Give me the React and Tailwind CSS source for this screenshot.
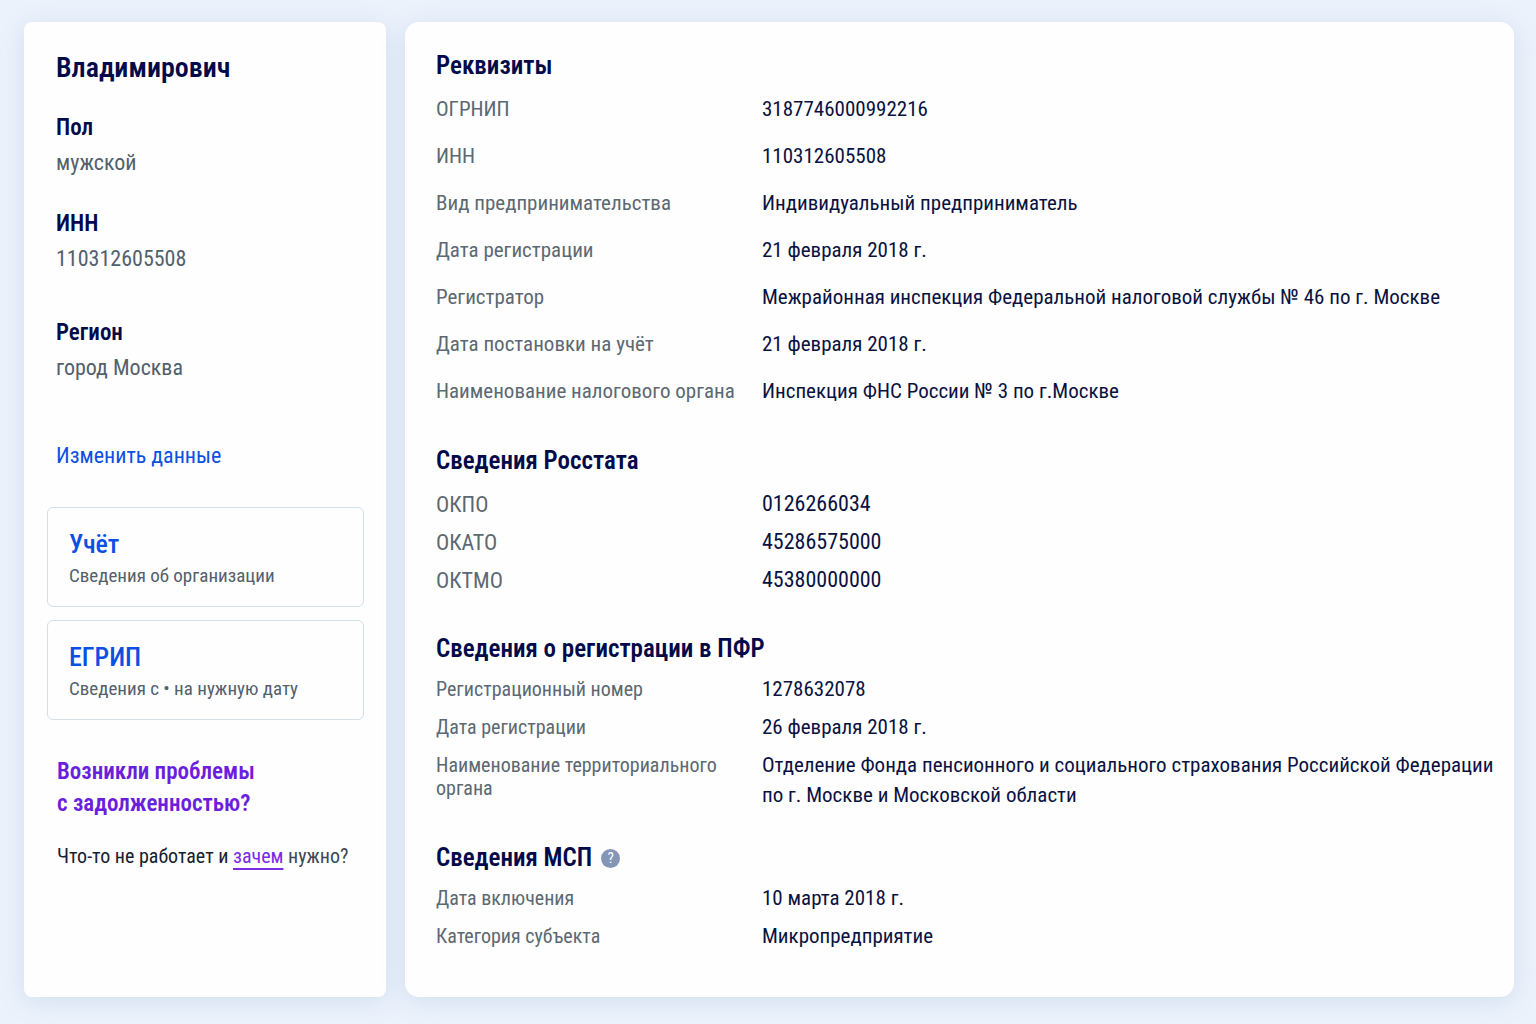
import React from 'react';

const REQUISITES = [
  ['ОГРНИП', '3187746000992216'],
  ['ИНН', '110312605508'],
  ['Вид предпринимательства', 'Индивидуальный предприниматель'],
  ['Дата регистрации', '21 февраля 2018 г.'],
  ['Регистратор', 'Межрайонная инспекция Федеральной налоговой службы № 46 по г. Москве'],
  ['Дата постановки на учёт', '21 февраля 2018 г.'],
  ['Наименование налогового органа', 'Инспекция ФНС России № 3 по г.Москве'],
];

const ROSSTAT = [
  ['ОКПО', '0126266034'],
  ['ОКАТО', '45286575000'],
  ['ОКТМО', '45380000000'],
];

const PENSION_FUND = [
  ['Регистрационный номер', '1278632078'],
  ['Дата регистрации', '26 февраля 2018 г.'],
  [
    'Наименование территориального органа',
    'Отделение Фонда пенсионного и социального страхования Российской Федерации по г. Москве и Московской области',
  ],
];

const SME = [
  ['Дата включения', '10 марта 2018 г.'],
  ['Категория субъекта', 'Микропредприятие'],
];

const DENSITY = {
  loose: { list: 'mt-[13px] space-y-[17px]', label: 'text-[21px]', value: 'text-[21px]' },
  codes: { list: 'mt-[13px] space-y-2', label: 'text-[22px]', value: 'text-[22px]' },
  compact: { list: 'mt-[10px] space-y-2', label: 'text-[20px]', value: 'text-[21px]' },
};

function Field({ label, value, className }) {
  return (
    <div className={className}>
      <dt className="text-[23px] leading-7 font-semibold text-[#030a4a]">{label}</dt>
      <dd className="mt-[7px] text-[22px] leading-7 text-[#53606c]">{value}</dd>
    </div>
  );
}

function LinkCard({ title, text }) {
  return (
    <a href="#" className="block rounded-md border border-[#d5dde9] px-[21px] pt-[21px] pb-[17px]">
      <span className="block text-[26px] leading-[30px] font-medium text-[#0b4fe3]">{title}</span>
      <span className="mt-1 block text-[19px] leading-[26px] text-[#53606c]">{text}</span>
    </a>
  );
}

function Section({ title, rows, hint, density = 'compact', className }) {
  const styles = DENSITY[density];

  return (
    <section className={className}>
      <div className="flex items-center gap-[9px]">
        <h2 className="text-[25px] leading-[30px] font-semibold text-[#030a4a]">{title}</h2>
        {hint}
      </div>
      <dl className={styles.list}>
        {rows.map(([label, value]) => (
          <div key={label} className="grid grid-cols-[300px_minmax(0,1fr)] gap-x-[26px]">
            <dt className={`pt-1 leading-[23px] text-[#5c6872] ${styles.label}`}>{label}</dt>
            <dd className={`leading-[30px] text-[#0a1140] ${styles.value}`}>{value}</dd>
          </div>
        ))}
      </dl>
    </section>
  );
}

function HelpButton() {
  return (
    <button
      type="button"
      aria-label="Что такое МСП"
      className="flex size-[19px] items-center justify-center rounded-full bg-[#8496b5] text-[15px] leading-none text-white"
    >
      ?
    </button>
  );
}

export default function App() {
  return (
    <div className="flex min-h-screen gap-[19px] bg-[#ebf2fc] pt-[22px] pr-[22px] pb-[27px] pl-6 font-['Roboto_Condensed',Roboto,sans-serif]">
      <aside className="w-[362px] shrink-0 rounded-lg bg-[#fefefe] pt-[30px] pr-[22px] pb-8 pl-[23px] shadow-[0_4px_24px_rgba(100,140,180,0.18)]">
        <div className="pl-[9px]">
          <h1 className="text-[28px] leading-8 font-semibold text-[#030a4a]">Владимирович</h1>
          <dl className="mt-[30px]">
            <Field label="Пол" value="мужской" />
            <Field label="ИНН" value="110312605508" className="mt-[33px]" />
            <Field label="Регион" value="город Москва" className="mt-[46px]" />
          </dl>
          <a href="#" className="mt-[60px] block text-[22px] leading-7 text-[#0b4fe3]">
            Изменить данные
          </a>
        </div>

        <nav className="mt-[37px] space-y-[13px]">
          <LinkCard title="Учёт" text="Сведения об организации" />
          <LinkCard title="ЕГРИП" text="Сведения с • на нужную дату" />
        </nav>

        <div className="mt-9 pl-[10px]">
          <h2 className="text-[23px] leading-8 font-semibold text-[#6a1fdc]">
            Возникли проблемы
            <br />с задолженностью?
          </h2>
          <p className="mt-[22px] text-[20px] leading-7 whitespace-nowrap text-[#16202f]">
            Что-то не работает и{' '}
            <a href="#" className="text-[#7a2be6] underline decoration-2 underline-offset-[5px]">
              зачем
            </a>{' '}
            <span className="text-[#3c4855]">нужно?</span>
          </p>
        </div>
      </aside>

      <main className="min-w-0 flex-1 rounded-[14px] bg-[#fefefe] pt-[29px] pr-4 pb-8 pl-[31px] shadow-[0_4px_24px_rgba(100,140,180,0.18)]">
        <Section title="Реквизиты" rows={REQUISITES} density="loose" />
        <Section title="Сведения Росстата" rows={ROSSTAT} density="codes" className="mt-10" />
        <Section title="Сведения о регистрации в ПФР" rows={PENSION_FUND} className="mt-[39px]" />
        <Section title="Сведения МСП" rows={SME} hint={<HelpButton />} className="mt-[33px]" />
      </main>
    </div>
  );
}
